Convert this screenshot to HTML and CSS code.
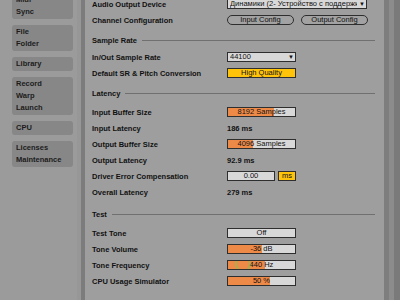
FILE: index.html
```html
<!DOCTYPE html>
<html lang="en">
<head>
  <meta charset="UTF-8">
  <title>Preferences</title>
  <link rel="stylesheet" href="styles.css">
</head>
<body>
  <div class="app">
    <nav class="sidebar">
      <div class="tabs">
        <div class="tab"><span>Midi</span><span>Sync</span></div>
        <div class="tab"><span>File</span><span>Folder</span></div>
        <div class="tab"><span>Library</span></div>
        <div class="tab"><span>Record</span><span>Warp</span><span>Launch</span></div>
        <div class="tab"><span>CPU</span></div>
        <div class="tab"><span>Licenses</span><span>Maintenance</span></div>
      </div>
    </nav>
    <div class="divider"></div>

    <main class="prefs">
      <div class="content">
        <div class="row">
          <span class="label">Audio Output Device</span>
          <div class="select wide"><span>Динамики (2- Устройство с поддержкой High Definition Audio)</span><i>▼</i></div>
        </div>
        <div class="row">
          <span class="label">Channel Configuration</span>
          <div class="buttons">
            <span class="pill">Input Config</span>
            <span class="pill">Output Config</span>
          </div>
        </div>

        <div class="section sr">Sample Rate</div>
        <div class="row">
          <span class="label">In/Out Sample Rate</span>
          <div class="select"><span>44100</span><i>▼</i></div>
        </div>
        <div class="row">
          <span class="label">Default SR &amp; Pitch Conversion</span>
          <div class="box yellow">High Quality</div>
        </div>

        <div class="section latency">Latency</div>
        <div class="row">
          <span class="label">Input Buffer Size</span>
          <div class="box fill" style="--fill: 68%">8192 Samples</div>
        </div>
        <div class="row">
          <span class="label">Input Latency</span>
          <span class="value">186 ms</span>
        </div>
        <div class="row">
          <span class="label">Output Buffer Size</span>
          <div class="box fill" style="--fill: 38%">4096 Samples</div>
        </div>
        <div class="row">
          <span class="label">Output Latency</span>
          <span class="value">92.9 ms</span>
        </div>
        <div class="row">
          <span class="label">Driver Error Compensation</span>
          <div class="pair">
            <div class="box short">0.00</div>
            <div class="box yellow unit">ms</div>
          </div>
        </div>
        <div class="row">
          <span class="label">Overall Latency</span>
          <span class="value">279 ms</span>
        </div>

        <div class="section test">Test</div>
        <div class="row">
          <span class="label">Test Tone</span>
          <div class="box">Off</div>
        </div>
        <div class="row">
          <span class="label">Tone Volume</span>
          <div class="box fill" style="--fill: 50%">-36 dB</div>
        </div>
        <div class="row">
          <span class="label">Tone Frequency</span>
          <div class="box fill" style="--fill: 55%">440 Hz<span class="cursor"></span></div>
        </div>
        <div class="row">
          <span class="label">CPU Usage Simulator</span>
          <div class="box fill" style="--fill: 62%">50 %</div>
        </div>
      </div>
    </main>

    <div class="scrollbar"></div>
  </div>
</body>
</html>
```

FILE: styles.css
```css
html, body {
  margin: 0;
  padding: 0;
  background: #9c9c9c;
  color: #111;
  font-family: "Liberation Sans", Arial, sans-serif;
  font-size: 7.5px;
  overflow: hidden;
}
.app {
  display: flex;
  width: 400px;
  height: 300px;
}
.sidebar {
  width: 77px;
  padding-left: 12px;
  box-sizing: border-box;
  background: #9b9b9b;
}
.tabs {
  display: flex;
  flex-direction: column;
  gap: 6px;
  width: 61px;
  margin-top: -7px;
}
.tab {
  display: flex;
  flex-direction: column;
  padding: 1px 0 1px 4px;
  line-height: 12px;
  font-weight: bold;
  color: #1c1c1c;
  background: #878787;
  border-radius: 3px;
}
.divider {
  width: 8px;
  background: linear-gradient(to right, #979797 0 4px, #7c7c7c 4px 8px);
}
.prefs {
  width: 299px;
  padding: 0 9px 0 7px;
  box-sizing: border-box;
  background: #9e9e9e;
}
.content {
  margin-top: -4px;
}
.row {
  display: grid;
  grid-template-columns: 135px 1fr;
  align-items: center;
  height: 16px;
}
.label, .value {
  font-weight: bold;
}
.section {
  display: flex;
  align-items: center;
  gap: 5px;
  height: 16px;
  font-weight: bold;
}
.section::after {
  content: "";
  flex: 1;
  height: 1px;
  background: #707070;
}
.section.sr {
  margin: 4px 0 1px;
}
.section.latency {
  margin: 4px 0 3px;
}
.section.test {
  margin: 6px 0 3px;
}
.box, .select {
  width: 69px;
  height: 10px;
  box-sizing: border-box;
  border: 1px solid #2e2e2e;
  background: #d8d8d8;
  line-height: 8px;
  text-align: center;
  white-space: nowrap;
  overflow: hidden;
}
.select {
  display: flex;
  justify-content: space-between;
  text-align: left;
  padding: 0 1px 0 2px;
}
.select span {
  flex: 1;
  min-width: 0;
  overflow: hidden;
}
.select i {
  font-style: normal;
  font-size: 6px;
  padding-left: 2px;
}
.select.wide {
  width: 140px;
}
.yellow {
  background: #ffc40a;
}
.fill {
  position: relative;
  background: linear-gradient(to right, #ee8a48 var(--fill), #d8d8d8 var(--fill));
}
.buttons, .pair {
  display: flex;
  gap: 7px;
}
.pair {
  gap: 3px;
}
.pill {
  width: 67px;
  height: 10px;
  box-sizing: border-box;
  border: 1px solid #2e2e2e;
  border-radius: 5px;
  line-height: 8px;
  text-align: center;
  background: #a2a2a2;
}
.short {
  width: 48px;
}
.unit {
  width: 18px;
}
.cursor {
  position: absolute;
  left: 7px;
  top: -5px;
  width: 16px;
  height: 16px;
  box-sizing: border-box;
  border: 2px solid rgba(120, 200, 90, 0.55);
  border-radius: 50%;
}
.scrollbar {
  width: 16px;
  background: linear-gradient(to right, #7e7e7e 0 5px, #8c8c8c 5px 10px, #7a7a7a 10px 16px);
}
```
